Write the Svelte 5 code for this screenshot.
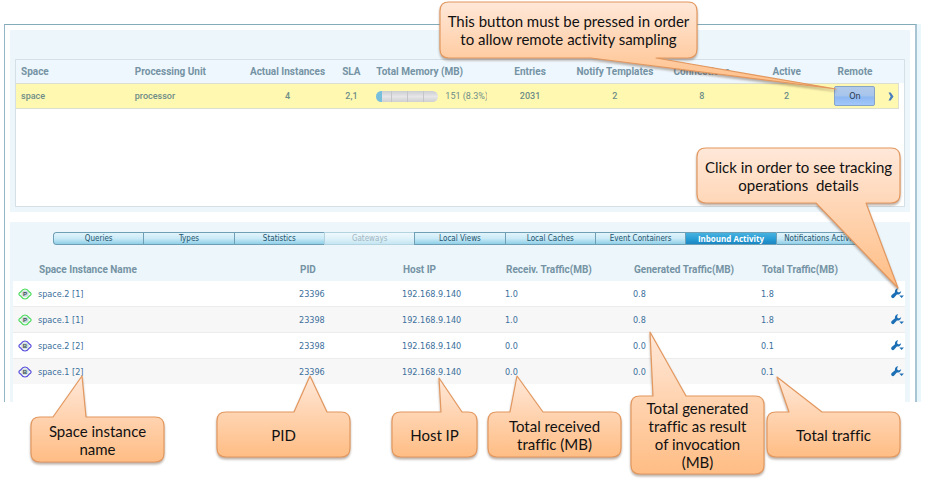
<script>
  const spaceColumns = [
    { label: 'Space', width: 114, align: 'left' },
    { label: 'Processing Unit', width: 114, align: 'left' },
    { label: 'Actual Instances', width: 88, align: 'center' },
    { label: 'SLA', width: 40, align: 'center' },
    { label: 'Total Memory (MB)', width: 116, align: 'left' },
    { label: 'Entries', width: 86, align: 'center' },
    { label: 'Notify Templates', width: 84, align: 'center' },
    { label: 'Connections', width: 90, align: 'center' },
    { label: 'Active', width: 80, align: 'center' },
    { label: 'Remote', width: 57, align: 'center' },
    { label: '', width: 15, align: 'center' }
  ];
  const instanceColumns = [
    { label: '', width: 25 },
    { label: 'Space Instance Name', width: 261 },
    { label: 'PID', width: 103 },
    { label: 'Host IP', width: 103 },
    { label: 'Receiv. Traffic(MB)', width: 128 },
    { label: 'Generated Traffic(MB)', width: 128 },
    { label: 'Total Traffic(MB)', width: 129 },
    { label: '', width: 15 }
  ];
  const total = (columns) => columns.reduce((sum, c) => sum + c.width, 0);

  const instances = [
    { kind: 'P', name: 'space.2 [1]', pid: 23396, host: '192.168.9.140', received: '1.0', generated: '0.8', sum: '1.8' },
    { kind: 'P', name: 'space.1 [1]', pid: 23398, host: '192.168.9.140', received: '1.0', generated: '0.8', sum: '1.8' },
    { kind: 'B', name: 'space.2 [2]', pid: 23398, host: '192.168.9.140', received: '0.0', generated: '0.0', sum: '0.1' },
    { kind: 'B', name: 'space.1 [2]', pid: 23396, host: '192.168.9.140', received: '0.0', generated: '0.0', sum: '0.1' }
  ];

  const tabs = [
    'Queries', 'Types', 'Statistics', 'Gateways', 'Local Views',
    'Local Caches', 'Event Containers', 'Inbound Activity', 'Notifications Activity'
  ];
  let activeTab = $state('Inbound Activity');
  let remote = $state(true);

  // base: the two points where the tail joins the box; tip: its point. All relative to the box.
  const callouts = [
    { x: 440, y: 2, w: 257, h: 56, side: 'bottom', base: [151, 216], tip: [396, 87], lines: ['This button must be pressed in order', 'to allow remote activity sampling'] },
    { x: 697, y: 148, w: 203, h: 55, side: 'bottom', base: [119, 169], tip: [201, 140], lines: ['Click in order to see tracking', 'operations\u00a0 details'] },
    { x: 31, y: 417, w: 133, h: 45, side: 'top', base: [22, 55], tip: [51, -41], lines: ['Space instance', 'name'] },
    { x: 217, y: 412, w: 133, h: 45, side: 'top', base: [77, 110], tip: [93, -36], lines: ['PID'] },
    { x: 392, y: 412, w: 85, h: 45, side: 'top', base: [49, 70], tip: [47, -34], lines: ['Host IP'] },
    { x: 488, y: 412, w: 133, h: 45, side: 'top', base: [22, 55], tip: [29, -36], lines: ['Total received', 'traffic (MB)'] },
    { x: 631, y: 396, w: 133, h: 78, side: 'top', base: [22, 55], tip: [19, -64], lines: ['Total generated', 'traffic as result', 'of invocation', '(MB)'] },
    { x: 767, y: 412, w: 133, h: 45, side: 'top', base: [22, 55], tip: [10, -35], lines: ['Total traffic'] }
  ];

  function outline({ w, h, side, base, tip }) {
    const r = 9;
    const up = side === 'top' ? `L${base[0]} 0L${tip[0]} ${tip[1]}L${base[1]} 0` : '';
    const down = side === 'bottom' ? `L${base[1]} ${h}L${tip[0]} ${tip[1]}L${base[0]} ${h}` : '';
    return `M${r} 0${up}L${w - r} 0Q${w} 0 ${w} ${r}L${w} ${h - r}Q${w} ${h} ${w - r} ${h}${down}L${r} ${h}Q0 ${h} 0 ${h - r}L0 ${r}Q0 0 ${r} 0Z`;
  }
</script>

<main class="page">
  <div class="window">
    <section class="panel spaces">
      <div class="grid-box">
        <table class="space-table">
          <colgroup>
            {#each spaceColumns as c}
              <col style="width: {(c.width / total(spaceColumns)) * 100}%" />
            {/each}
          </colgroup>
          <thead>
            <tr>
              {#each spaceColumns as c}
                <th class={c.align}>{c.label}</th>
              {/each}
            </tr>
          </thead>
          <tbody>
            <tr>
              <td class="left">space</td>
              <td class="left">processor</td>
              <td>4</td>
              <td>2,1</td>
              <td class="left">
                <div class="memory">
                  <div class="gauge"><span></span><span></span><span></span><span></span></div>
                  <div class="usage">151 (8.3%)</div>
                </div>
              </td>
              <td>2031</td>
              <td>2</td>
              <td>8</td>
              <td>2</td>
              <td>
                <button class="toggle" aria-pressed={remote} onclick={() => (remote = !remote)}>
                  {remote ? 'On' : 'Off'}
                </button>
              </td>
              <td>
                <button class="icon-button" aria-label="Open space">
                  <svg width="6" height="9" viewBox="0 0 6 9">
                    <path d="M0.5 0.5H2.7L5.5 4.5L2.7 8.5H0.5L2.6 4.5Z" fill="#4a7dbd" />
                  </svg>
                </button>
              </td>
            </tr>
          </tbody>
        </table>
      </div>
    </section>

    <section class="panel instances">
      <nav class="tabs">
        {#each tabs as tab}
          <button
            class="tab"
            class:active={tab === activeTab}
            disabled={tab === 'Gateways'}
            onclick={() => (activeTab = tab)}>{tab}</button>
        {/each}
      </nav>
      <table class="instance-table">
        <colgroup>
          {#each instanceColumns as c}
            <col style="width: {(c.width / total(instanceColumns)) * 100}%" />
          {/each}
        </colgroup>
        <thead>
          <tr>
            {#each instanceColumns as c}
              <th>{c.label}</th>
            {/each}
          </tr>
        </thead>
        <tbody>
          {#each instances as row}
            <tr>
              <td class="kind">
                <svg width="14" height="12" viewBox="0 0 14 12" class={row.kind === 'P' ? 'primary' : 'backup'}>
                  <path d="M0.8 6Q1 4.8 2.8 3.9Q4.6 1 7 1Q9.4 1 11.2 3.9Q13 4.8 13.2 6Q13 7.2 11.2 8.1Q9.4 11 7 11Q4.6 11 2.8 8.1Q1 7.2 0.8 6Z" stroke-width="1.2" stroke-linejoin="round" />
                  <ellipse cx="7" cy="5.8" rx="3.6" ry="3.2" class="lens" />
                  <text x="7" y="8" text-anchor="middle">{row.kind}</text>
                </svg>
              </td>
              <td>{row.name}</td>
              <td>{row.pid}</td>
              <td>{row.host}</td>
              <td>{row.received}</td>
              <td>{row.generated}</td>
              <td>{row.sum}</td>
              <td>
                <button class="icon-button" aria-label="Tracking operations for {row.name}">
                  <svg width="13" height="11" viewBox="0 0 13 11" fill="#1c6fb5">
                    <path d="M7.2 0.2Q4.1 0.6 3.9 3.3L4 4.3L0.7 6.9Q-0.4 8.3 0.6 9.5Q1.9 10.7 3.2 9.6L5.9 6.5Q9.4 7 10.2 3.2L7.8 4.4L6.2 3.6L6.2 2Z" />
                    <path d="M8.3 7.4H12.9L10.6 9.9Z" />
                  </svg>
                </button>
              </td>
            </tr>
          {/each}
        </tbody>
      </table>
    </section>
  </div>

  <svg class="defs" width="0" height="0" aria-hidden="true">
    <defs>
      <linearGradient id="peach" x1="0" y1="0" x2="0" y2="1">
        <stop offset="0" stop-color="#ffe8d9" />
        <stop offset="1" stop-color="#ffbd84" />
      </linearGradient>
    </defs>
  </svg>
  {#each callouts as c}
    <div class="callout" style="left: {c.x}px; top: {c.y}px; width: {c.w}px; height: {c.h}px">
      <svg width={c.w} height={c.h} aria-hidden="true">
        <path d={outline(c)} fill="url(#peach)" stroke="#e3985f" stroke-width="1.2" stroke-linejoin="round" />
      </svg>
      <p>{#each c.lines as line, i}{#if i}<br />{/if}{line}{/each}</p>
    </div>
  {/each}
</main>

<style>
  :global(body) {
    background: #fff;
  }
  .page {
    position: relative;
    box-sizing: border-box;
    min-height: 481px;
    padding: 24px 10px 0 4px;
    font-family: Roboto, "Liberation Sans", sans-serif;
  }
  .window {
    border: 1px solid #84abb9;
    border-width: 1px 2px 0 1px;
    border-right-color: #a9c5d4;
    border-left-color: #93b6c6;
    padding: 5px 5px 0;
    box-shadow: 4px 0 0 #e9f6fc;
  }
  .panel {
    background: #ecf6fb;
  }
  .spaces {
    padding: 29px 5px 5px;
  }
  .grid-box {
    min-height: 146px;
    border: 1px solid #d5e0e6;
    background: linear-gradient(#eef7fd 23px, #fff 23px);
  }
  table {
    width: 100%;
    table-layout: fixed;
    border-collapse: collapse;
  }
  th,
  td {
    padding: 0;
    white-space: nowrap;
  }
  th {
    font-size: 10px;
    font-weight: 700;
    color: #7593a4;
  }
  .space-table {
    width: calc(100% - 5px);
  }
  .space-table th {
    height: 23px;
    text-align: center;
  }
  .space-table td {
    height: 24px;
    text-align: center;
    font-size: 9px;
    font-weight: 500;
    color: #6d8d88;
    background: #fff8b0;
    border: solid #dcdfd0;
    border-width: 1px 0;
  }
  .space-table td:last-child {
    border-right-width: 1px;
  }
  .space-table .left {
    text-align: left;
    padding-left: 5px;
  }
  .memory {
    display: flex;
    align-items: center;
    gap: 7px;
  }
  .gauge {
    display: flex;
    flex: none;
    width: 62px;
    height: 11px;
    border-radius: 6px;
    overflow: hidden;
    background: linear-gradient(#cbcdd2, #e6e6e8 50%, #cfd0d2);
  }
  .gauge span {
    flex: 1;
    border-right: 1px solid #c3c5c9;
  }
  .gauge span:first-child {
    background: linear-gradient(90deg, #78bfdc 6px, transparent 6px);
  }
  .gauge span:last-child {
    border: 0;
  }
  .usage {
    width: 42px;
    overflow: hidden;
    font-weight: 400;
  }
  button {
    font-family: inherit;
    cursor: pointer;
  }
  .toggle {
    display: block;
    width: 41px;
    height: 20px;
    margin: 0 auto;
    padding: 0;
    border: 1px solid #86a3c8;
    border-radius: 2px;
    background: linear-gradient(#b3cbea, #a6c4ec 50%, #8db7f2 55%, #a2c8fb);
    font: 9px "DejaVu Sans Condensed", sans-serif;
    color: #27374c;
  }
  .icon-button {
    display: block;
    margin: 0 auto;
    padding: 0;
    border: 0;
    background: none;
  }
  .icon-button svg {
    display: block;
  }
  .instances {
    margin-top: 10px;
    padding: 10px 5px 0 3px;
  }
  .tabs {
    display: flex;
    height: 13px;
    margin: 0 38px 0 40px;
    border-radius: 3px;
    overflow: hidden;
  }
  .tab {
    flex: 1 1 0;
    min-width: 0;
    padding: 0;
    border: solid #6f9fb5;
    border-width: 1px 0 1px 1px;
    background: linear-gradient(#e2f4fb, #c9eaf6 50%, #8fcfe8);
    font: 8px/11px "DejaVu Sans Condensed", sans-serif;
    color: #24546e;
    white-space: nowrap;
  }
  .tab:first-child {
    border-radius: 3px 0 0 3px;
  }
  .tab:last-child {
    border-right-width: 1px;
    border-radius: 0 3px 3px 0;
  }
  .tab:disabled {
    border-color: #b4d3e0;
    background: linear-gradient(#eef8fc, #dff2f9 50%, #c4e6f2);
    color: #9fb6c1;
  }
  .tab.active {
    background: linear-gradient(#49b2df, #2a9fd6 50%, #1b86c2);
    font-family: "Open Sans", sans-serif;
    font-weight: 700;
    color: #fff;
  }
  .instance-table th {
    height: 30px;
    padding: 0 0 6px 1px;
    text-align: left;
    vertical-align: bottom;
  }
  .instance-table tbody {
    background: #fff;
    border-bottom: 18px solid #fff;
  }
  .instance-table td {
    height: 25px;
    border-bottom: 1px solid #ececec;
    font: 9px "DejaVu Sans Condensed", sans-serif;
    color: #3b6f9c;
  }
  .instance-table tbody tr:nth-child(even) {
    background: #f7f7f7;
  }
  .kind svg {
    display: block;
    margin-left: 5px;
  }
  .kind path {
    fill: #f2fbf4;
  }
  .primary path {
    stroke: #4fdc5f;
  }
  .backup path {
    stroke: #5a4fdc;
  }
  .lens {
    fill: #cfdcdc;
  }
  .kind text {
    font: bold 6px "Liberation Sans", sans-serif;
    fill: #3d5058;
  }
  .defs {
    position: absolute;
  }
  .callout {
    position: absolute;
    display: flex;
    align-items: center;
    justify-content: center;
    font-family: Lato, sans-serif;
    font-size: 15px;
    line-height: 18px;
    font-variant-ligatures: none;
    color: #111;
    text-align: center;
    white-space: nowrap;
  }
  .callout svg {
    position: absolute;
    left: 0;
    top: 0;
    overflow: visible;
    filter: drop-shadow(0 2px 1px rgba(90, 60, 40, 0.4));
  }
  .callout p {
    position: relative;
    margin: 0;
  }
</style>
